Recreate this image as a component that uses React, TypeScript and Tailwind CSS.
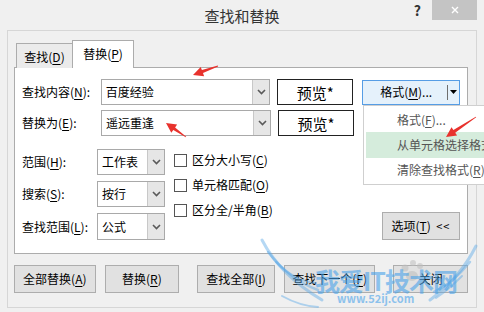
import React from "react";

const U = ({ c }: { c: string }) => <span className="underline underline-offset-[2px] decoration-1">{c}</span>;

const Chevron = () => (
  <svg width="9" height="6" viewBox="0 0 9 6">
    <polyline points="1,1 4.5,4.5 8,1" fill="none" stroke="#5a5a5a" strokeWidth="1.6" />
  </svg>
);

const Combo = ({ text, w, h = 26 }: { text: string; w: string; h?: number }) => (
  <div className={`flex ${w} border border-[#a9a9a9] bg-white`} style={{ height: h }}>
    <div className="flex flex-1 items-center pl-[4px] text-[12px] leading-none">{text}</div>
    <div className="flex w-[17px] items-center justify-center border-l border-[#c8c8c8] bg-[#e6e6e6]">
      <Chevron />
    </div>
  </div>
);

const Preview = () => (
  <div className="ml-[7px] flex h-[26px] w-[76px] items-center justify-center border border-[#222] bg-white text-[15px] leading-none">
    预览*
  </div>
);

const Check = ({ label, m }: { label: string; m: string }) => (
  <div className="flex h-[22px] items-center">
    <div className="h-[13px] w-[13px] border border-[#555] bg-white" />
    <span className="ml-[5px] text-[12px] leading-none">
      {label}(<U c={m} />)
    </span>
  </div>
);

const Btn = ({ children, cls }: { children: React.ReactNode; cls: string }) => (
  <div className={`flex h-[28px] items-center justify-center whitespace-nowrap border border-[#adadad] bg-[#e1e1e1] text-[12px] leading-none ${cls}`}>
    {children}
  </div>
);

const Arrow = ({ tip, tail }: { tip: [number, number]; tail: [number, number] }) => {
  const dx = tail[0] - tip[0];
  const dy = tail[1] - tip[1];
  const L = Math.hypot(dx, dy);
  const ux = dx / L, uy = dy / L;
  const nx = -uy, ny = ux;
  const hl = 10, hw = 5;
  const bx = tip[0] + ux * hl, by = tip[1] + uy * hl;
  const p = (x: number, y: number) => `${x.toFixed(1)},${y.toFixed(1)}`;
  const pts = [
    p(tip[0], tip[1]),
    p(bx + nx * hw, by + ny * hw),
    p(bx + nx * 1.6, by + ny * 1.6),
    p(tail[0] + nx * 0.4, tail[1] + ny * 0.4),
    p(tail[0] - nx * 0.4, tail[1] - ny * 0.4),
    p(bx - nx * 1.6, by - ny * 1.6),
    p(bx - nx * hw, by - ny * hw),
  ].join(" ");
  return <polygon points={pts} fill="#e8322d" />;
};

export default function App() {
  return (
    <div className="relative h-[312px] w-[484px] overflow-hidden bg-[#f0f0f0] font-['Microsoft_YaHei','Noto_Sans_CJK_SC','Noto_Sans',sans-serif] text-[12px] text-black">
      {/* title bar */}
      <div className="grid h-[30px] grid-cols-[1fr_auto_1fr]">
        <div />
        <div className="flex items-center text-[15px] leading-none text-[#333]">查找和替换</div>
        <div className="flex items-start justify-end pr-[7px]">
          <div className="mr-[11px] flex h-[19px] items-center text-[14px] font-bold leading-none text-[#333]">?</div>
          <div className="flex h-[20px] w-[45px] items-center justify-center bg-[#c4c4c4]">
            <svg width="8" height="8" viewBox="0 0 8 8">
              <path d="M1 1 L7 7 M7 1 L1 7" stroke="#fff" strokeWidth="1.4" />
            </svg>
          </div>
        </div>
      </div>

      {/* frame */}
      <div className="mx-[7px] h-[278px] border border-[#d6d6d6] pl-[6px] pr-[8px] pt-[9px]">
        {/* tabs */}
        <div className="-mb-px ml-[2px] flex h-[28px] items-end">
          <div className="flex h-[25px] w-[56px] items-center justify-center border-l border-t border-[#acacac] bg-[#ebebeb] pt-[1px] text-[12px] leading-none">
            查找(<U c="D" />)
          </div>
          <div className="relative z-10 flex h-[28px] w-[62px] items-center justify-center border-l border-r border-t border-[#acacac] bg-white pb-[2px] text-[12px] leading-none">
            替换(<U c="P" />)
          </div>
        </div>

        {/* panel */}
        <div className="flex h-[187px] flex-col border border-[#acacac] bg-white pl-[7px] pr-[7px] pt-[11px]">
          <div className="flex h-[26px] items-center">
            <div className="w-[79px] text-[12px] leading-none">
              查找内容(<U c="N" />):
            </div>
            <Combo text="百度经验" w="w-[170px]" />
            <Preview />
            <div className="ml-[9px] flex h-[25px] w-[98px] items-center border border-[#569de5] bg-[#e5f1fb]">
              <div className="flex flex-1 items-center justify-center pl-[2px] text-[12px] leading-none">
                格式(<U c="M" />)...
              </div>
              <div className="h-[15px] w-px bg-[#6e6e6e]" />
              <div className="flex w-[11px] items-center justify-center">
                <svg width="7" height="4" viewBox="0 0 7 4">
                  <polygon points="0,0 7,0 3.5,4" fill="#000" />
                </svg>
              </div>
            </div>
          </div>
          <div className="mt-[5px] flex h-[26px] items-center">
            <div className="w-[79px] text-[12px] leading-none">
              替换为(<U c="E" />):
            </div>
            <Combo text="遥远重逢" w="w-[170px]" />
            <Preview />
          </div>

          <div className="mt-[13px] flex flex-1">
            <div className="flex flex-col gap-[6px]">
              <div className="flex items-center">
                <div className="w-[75px] leading-none">范围(<U c="H" />):</div>
                <Combo text="工作表" w="w-[68px]" />
              </div>
              <div className="flex items-center">
                <div className="w-[75px] leading-none">搜索(<U c="S" />):</div>
                <Combo text="按行" w="w-[68px]" />
              </div>
              <div className="flex items-center">
                <div className="w-[75px] leading-none">查找范围(<U c="L" />):</div>
                <Combo text="公式" w="w-[68px]" h={27} />
              </div>
            </div>
            <div className="ml-[9px] flex flex-col gap-[3px]">
              <Check label="区分大小写" m="C" />
              <Check label="单元格匹配" m="O" />
              <Check label="区分全/半角" m="B" />
            </div>
            <div className="flex flex-1 items-start justify-end pt-[63px]">
              <Btn cls="w-[78px]">
                选项(<U c="T" />)&nbsp;&nbsp;<span className="text-[11px] tracking-[1px]">&lt;&lt;</span>
              </Btn>
            </div>
          </div>
        </div>

        {/* bottom buttons */}
        <div className="mt-[11px] flex">
          <Btn cls="w-[82px]">全部替换(<U c="A" />)</Btn>
          <Btn cls="ml-[9px] w-[75px]">替换(<U c="R" />)</Btn>
          <Btn cls="ml-[18px] w-[78px]">查找全部(<U c="I" />)</Btn>
          <Btn cls="ml-[9px] w-[92px]">查找下一个(<U c="F" />)</Btn>
          <Btn cls="ml-[18px] w-[75px]">关闭</Btn>
        </div>
      </div>

      {/* dropdown menu */}
      <div className="absolute left-[363px] top-[105px] z-20 flex h-[80px] w-[140px] flex-col whitespace-nowrap border border-[#cfcfcf] bg-white py-px pl-[2px] text-[12px] leading-none text-[#555]">
        <div className="flex h-[26px] items-center pl-[31px]">
          格式(<U c="F" />)...
        </div>
        <div className="flex h-[26px] items-center bg-[#d5ecdc] pl-[31px]">
          从单元格选择格式(<U c="S" />)
        </div>
        <div className="flex h-[26px] items-center pl-[31px]">
          清除查找格式(<U c="R" />)
        </div>
      </div>

      {/* watermark */}
      <div className="pointer-events-none absolute left-0 top-0 z-30 h-[312px] w-[484px]">
        <svg className="absolute left-0 top-0" width="484" height="312" viewBox="0 0 484 312">
          <g fill="none" stroke="#5aa9e6" strokeOpacity="0.45" strokeLinecap="round">
            <path d="M262 240 Q280 275 322 300" strokeWidth="3" />
            <path d="M268 252 Q290 280 318 290" strokeWidth="2.5" />
            <path d="M276 262 Q296 282 316 283" strokeWidth="2" />
            <path d="M282 296 Q300 306 318 307" strokeWidth="2" />
            <path d="M476 246 Q460 278 430 300" strokeWidth="3" />
            <path d="M470 262 Q452 284 434 292" strokeWidth="2.5" />
            <path d="M462 276 Q448 290 436 298" strokeWidth="2" />
          </g>
          <g fill="#bdbdbd" fillOpacity="0.55">
            <circle cx="405" cy="268" r="3.5" />
            <circle cx="413" cy="263" r="3" />
            <circle cx="420" cy="266" r="3" />
            <ellipse cx="412" cy="276" rx="6" ry="5" />
          </g>
        </svg>
        <div className="absolute left-[315px] top-[268px] whitespace-nowrap text-[25px] font-bold leading-none tracking-[-1px] text-[#4aa3ea] opacity-60">
          我爱IT技术网
        </div>
        <div className="absolute left-[337px] top-[293px] whitespace-nowrap text-[11px] font-bold leading-none text-[#4aa3ea] opacity-60">
          www.52ij.com
        </div>
        <svg className="absolute left-0 top-0" width="484" height="312" viewBox="0 0 484 312">
          <Arrow tip={[193, 75]} tail={[218, 66]} />
          <Arrow tip={[166, 123]} tail={[186, 137]} />
          <Arrow tip={[446, 137]} tail={[476, 117]} />
        </svg>
      </div>
    </div>
  );
}
